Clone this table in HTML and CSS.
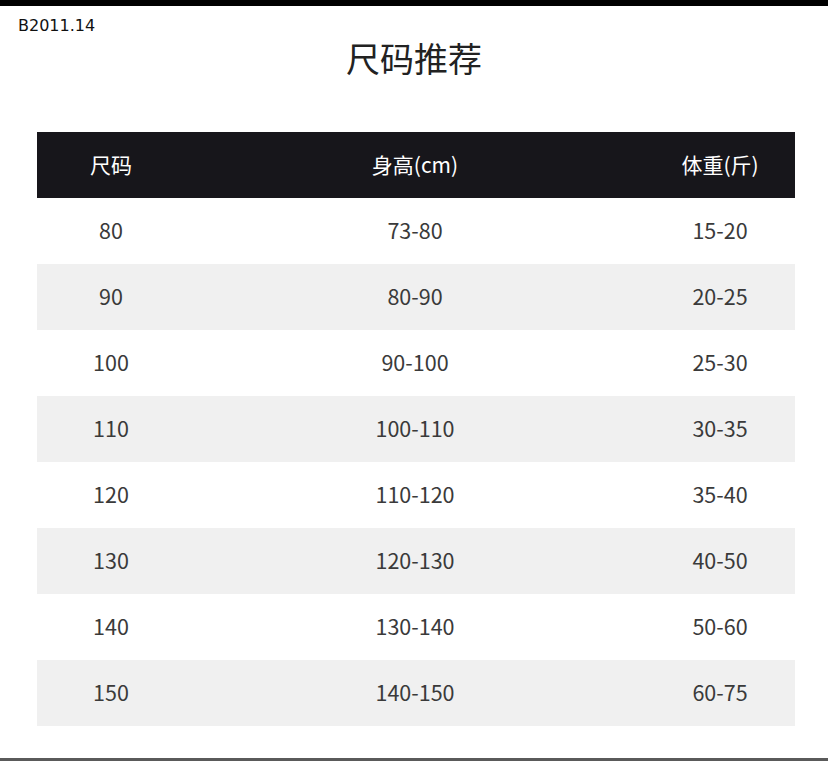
FILE: index.html
```html
<!DOCTYPE html>
<html lang="zh">
<head>
<meta charset="utf-8">
<title>尺码推荐</title>
<link rel="stylesheet" href="styles.css">
</head>
<body>
<div class="page">
  <div class="topbar"></div>
  <div class="code">B2011.14</div>
  <h1 class="title">尺码推荐</h1>
  <div class="table">
    <div class="row head"><span>尺码</span><span>身高(cm)</span><span>体重(斤)</span></div>
    <div class="row"><span>80</span><span>73-80</span><span>15-20</span></div>
    <div class="row alt"><span>90</span><span>80-90</span><span>20-25</span></div>
    <div class="row"><span>100</span><span>90-100</span><span>25-30</span></div>
    <div class="row alt"><span>110</span><span>100-110</span><span>30-35</span></div>
    <div class="row"><span>120</span><span>110-120</span><span>35-40</span></div>
    <div class="row alt"><span>130</span><span>120-130</span><span>40-50</span></div>
    <div class="row"><span>140</span><span>130-140</span><span>50-60</span></div>
    <div class="row alt"><span>150</span><span>140-150</span><span>60-75</span></div>
  </div>
  <div class="spacer"></div>
  <div class="bottomline"></div>
</div>
</body>
</html>
```
FILE: styles.css
```css
html, body {
  margin: 0;
  padding: 0;
  background: #fff;
}
.page {
  width: 828px;
  height: 762px;
  display: flex;
  flex-direction: column;
  overflow: hidden;
}
.topbar {
  height: 6px;
  background: #000;
  flex: none;
}
.code {
  font-family: "DejaVu Sans", sans-serif;
  font-size: 16px;
  line-height: 18px;
  color: #111;
  padding: 11px 0 0 18px;
  height: 18px;
  flex: none;
}
.title {
  margin: 3px 0 0 0;
  height: 40px;
  font-family: "Noto Sans CJK SC", sans-serif;
  font-weight: 400;
  font-size: 34px;
  line-height: 40px;
  color: #222;
  text-align: center;
  flex: none;
}
.table {
  margin: 54px 0 0 37px;
  width: 758px;
  display: flex;
  flex-direction: column;
  flex: none;
}
.row {
  display: grid;
  grid-template-columns: 148px 460px 150px;
  height: 66px;
  align-items: center;
  font-family: "Noto Sans CJK SC", sans-serif;
  font-size: 21.5px;
  line-height: 26px;
  padding-bottom: 2px;
  box-sizing: border-box;
  color: #3a3a3a;
  text-align: center;
}
.row.head {
  background: #17161b;
  color: #fff;
  font-size: 21px;
}
.row.alt {
  background: #f0f0f0;
}
.spacer {
  flex: 1;
}
.bottomline {
  height: 3px;
  background: #5a5a5a;
  flex: none;
  margin-bottom: 1px;
}
```
